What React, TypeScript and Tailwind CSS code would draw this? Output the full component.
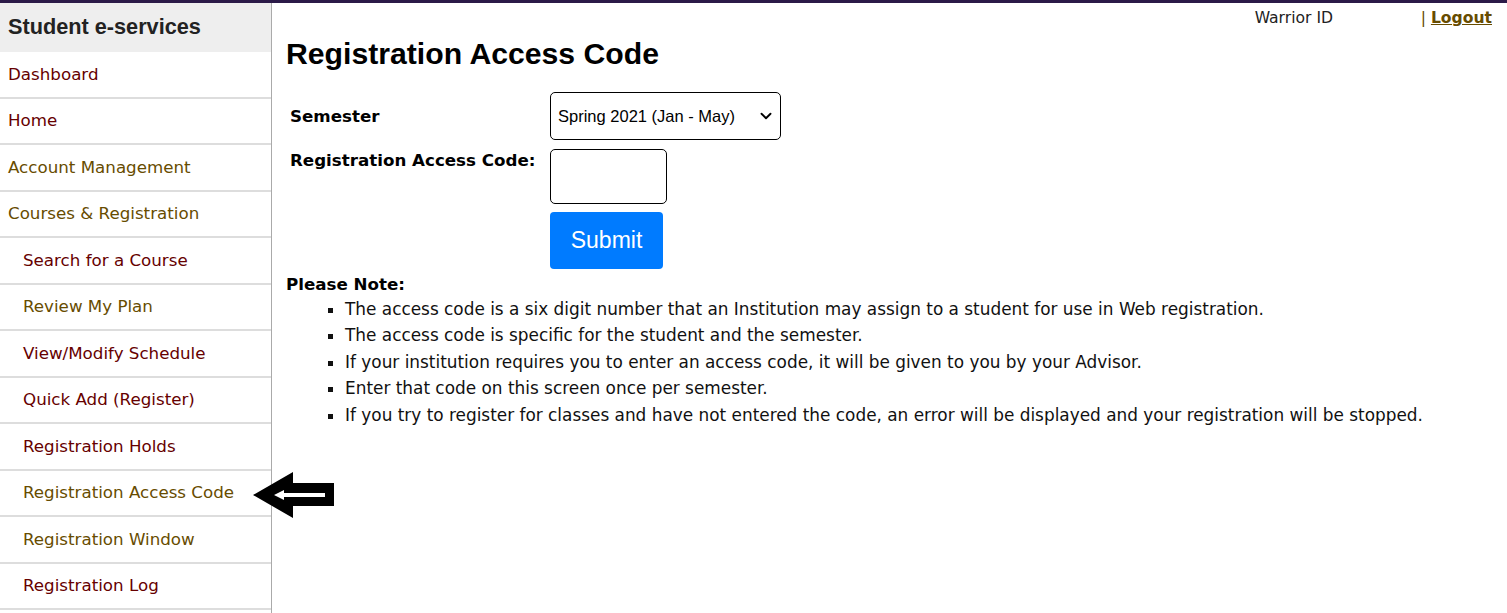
import { ChevronDown } from "lucide-react";

const RED = "text-[#660000]";
const BROWN = "text-[#674c00]";

const navItems = [
  { label: "Dashboard", sub: false, color: RED },
  { label: "Home", sub: false, color: RED },
  { label: "Account Management", sub: false, color: BROWN },
  { label: "Courses & Registration", sub: false, color: BROWN },
  { label: "Search for a Course", sub: true, color: RED },
  { label: "Review My Plan", sub: true, color: BROWN },
  { label: "View/Modify Schedule", sub: true, color: RED },
  { label: "Quick Add (Register)", sub: true, color: RED },
  { label: "Registration Holds", sub: true, color: RED },
  { label: "Registration Access Code", sub: true, color: BROWN },
  { label: "Registration Window", sub: true, color: BROWN },
  { label: "Registration Log", sub: true, color: RED },
];

const notes = [
  "The access code is a six digit number that an Institution may assign to a student for use in Web registration.",
  "The access code is specific for the student and the semester.",
  "If your institution requires you to enter an access code, it will be given to you by your Advisor.",
  "Enter that code on this screen once per semester.",
  "If you try to register for classes and have not entered the code, an error will be displayed and your registration will be stopped.",
];

function Sidebar() {
  return (
    <nav className="w-[272px] shrink-0 border-r border-[#aaaaaa] min-h-[610px]">
      <div className="h-[49px] bg-[#eeeeee] flex items-center pl-2 font-['Liberation_Sans',Arial,sans-serif] font-bold text-[21.7px] text-[#222]">
        Student e-services
      </div>
      {navItems.map((item) => (
        <div
          key={item.label}
          className={`h-[46.5px] border-b-2 border-[#dddddd] flex items-center text-[16.7px] ${item.sub ? "pl-[23px]" : "pl-2"} ${item.color}`}
        >
          {item.label}
        </div>
      ))}
    </nav>
  );
}

function Arrow() {
  return (
    <svg
      className="absolute left-[252px] top-[468px]"
      width="84"
      height="50"
      viewBox="0 0 84 50"
    >
      <polygon points="1,24 41,1 41,12 82,12 82,35 41,35 41,47" fill="#000" />
      <polygon points="22,24 32,19 32,22 73,22 73,26 32,26 32,29" fill="#fff" />
    </svg>
  );
}

export default function App() {
  return (
    <div className="relative min-h-[613px] bg-white font-['DejaVu_Sans',Verdana,sans-serif] text-black border-t-[3px] border-[#2b1a48]">
      <div className="flex">
        <Sidebar />
        <main className="flex-1 pl-[14px] pr-[15px]">
          <div className="flex justify-end text-[15.6px] h-[31px] pt-[1px] items-center">
            <span className="text-[#222] w-[166px]">Warrior ID</span>
            <span className={BROWN}>|</span>
            <a className={`ml-[5px] font-bold underline ${BROWN}`}>Logout</a>
          </div>
          <h1 className="font-['Liberation_Sans',Arial,sans-serif] font-bold text-[30.2px] leading-[32px] mt-[4px]">
            Registration Access Code
          </h1>
          <div className="mt-[22px] ml-[4px] grid grid-cols-[260px_auto] gap-y-[10px] items-start">
            <label className="font-bold text-[16.7px] leading-[24px] self-center mt-[-1px]">Semester</label>
            <div className="relative w-[231px]">
              <select className="appearance-none w-full h-[48px] border border-black rounded-[5px] pl-[7px] font-['Liberation_Sans',Arial,sans-serif] text-[16.5px] bg-white">
                <option>Spring 2021 (Jan - May)</option>
              </select>
              <ChevronDown className="absolute right-[6px] top-[15px] w-[18px] h-[18px] pointer-events-none" strokeWidth={2.5} />
            </div>
            <label className="font-bold text-[16.7px] leading-[24px] -mt-[2px]">Registration Access Code:</label>
            <input className="w-[117px] h-[55px] border border-black rounded-[5px] -mt-[1px]" />
            <div />
            <button className="w-[113px] h-[57px] bg-[#007bff] text-white rounded-[4px] font-['Liberation_Sans',Arial,sans-serif] text-[23px] -mt-[2px]">
              Submit
            </button>
          </div>
          <div className="mt-[3px] font-bold text-[16.7px] leading-[24px]">Please Note:</div>
          <ul className="list-[square] pl-[59px] text-[16.9px] leading-[26.4px] text-[#111]">
            {notes.map((n) => (
              <li key={n}>{n}</li>
            ))}
          </ul>
        </main>
      </div>
      <Arrow />
    </div>
  );
}
